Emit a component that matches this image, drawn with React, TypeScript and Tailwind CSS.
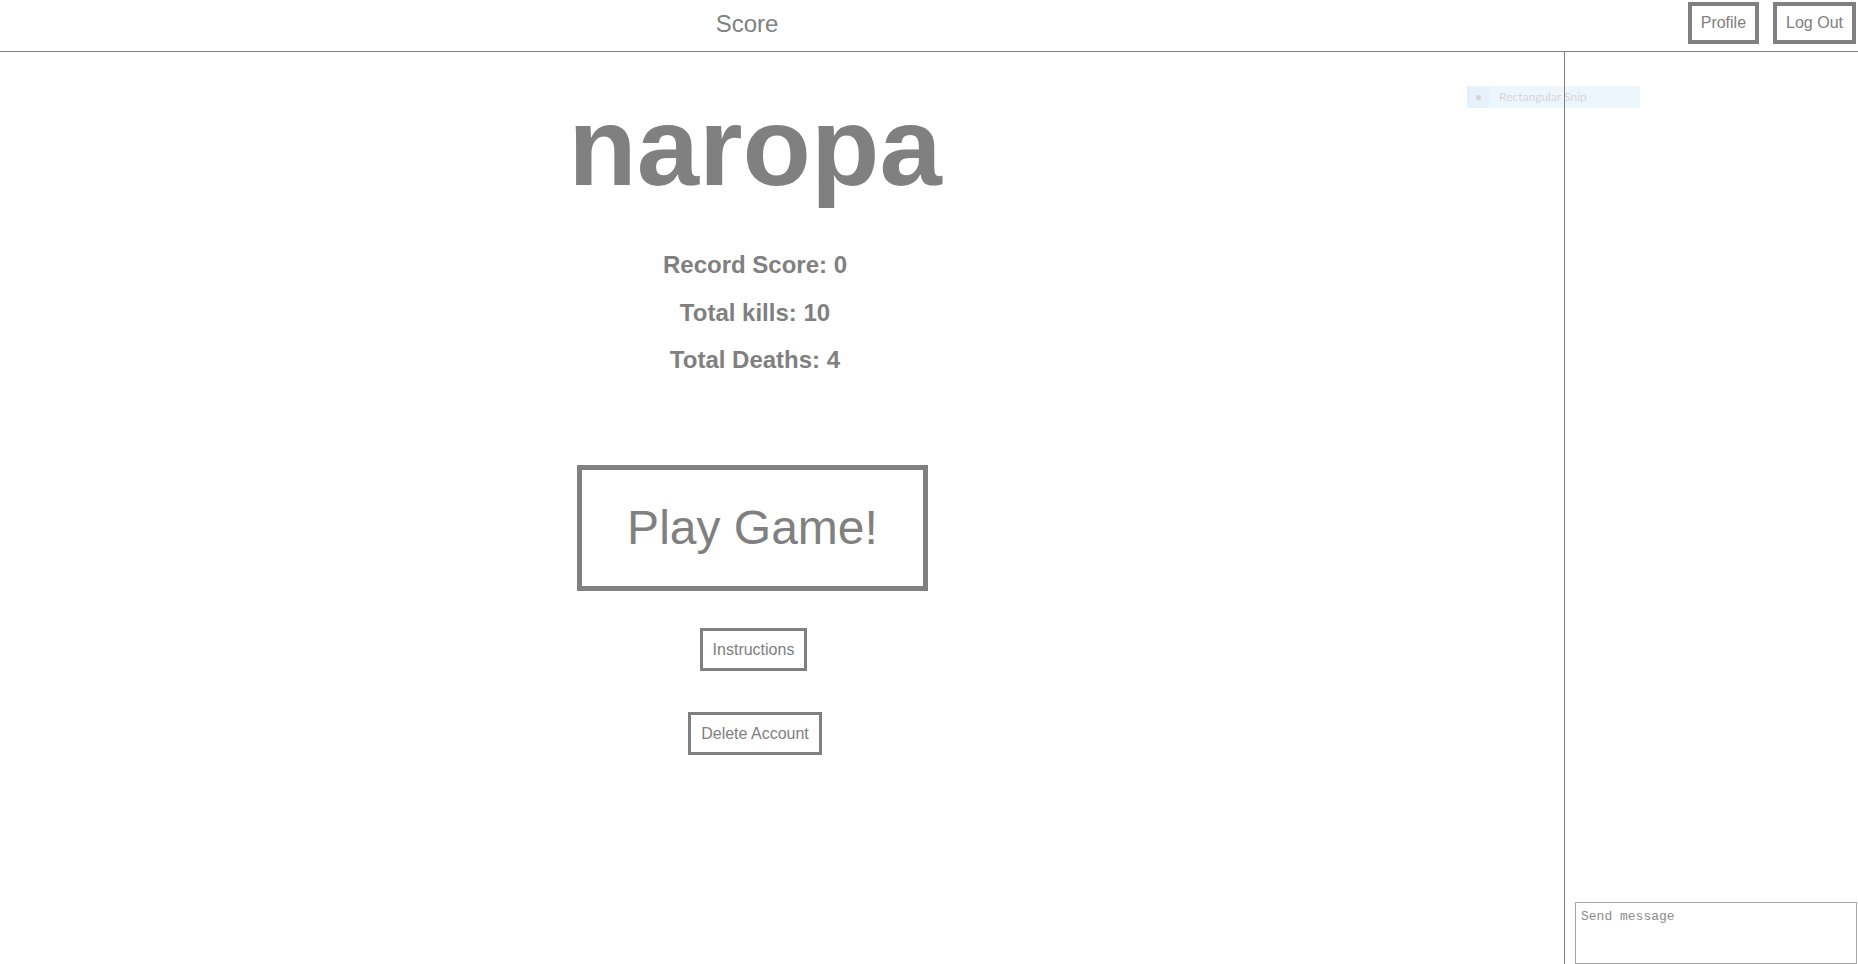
import { useState } from 'react';

const stats = [
  { label: 'Record Score', value: 0 },
  { label: 'Total kills', value: 10 },
  { label: 'Total Deaths', value: 4 },
];

function HeaderButton({ children }: { children: React.ReactNode }) {
  return (
    <button className="border-4 border-[#808080] bg-white px-[9px] py-[8px] text-[16px] leading-[18px] text-[#808080]">
      {children}
    </button>
  );
}

function SmallButton({ children }: { children: React.ReactNode }) {
  return (
    <button className="border-[3px] border-[#808080] bg-white px-[10px] py-[9px] text-[16px] leading-[19px] text-[#808080]">
      {children}
    </button>
  );
}

export default function App() {
  const [message, setMessage] = useState('');

  return (
    <div className="relative flex h-screen w-full flex-col overflow-hidden bg-white font-['Liberation_Sans',Arial,sans-serif] text-[#808080]">
      <header className="flex h-[52px] shrink-0 items-start border-b border-[#808080]">
        <div className="w-[1494px] shrink-0 pt-[10px] text-center text-[24px] leading-[28px]">Score</div>
        <div className="ml-auto mr-[2px] mt-[2px] flex gap-[14px]">
          <HeaderButton>Profile</HeaderButton>
          <HeaderButton>Log Out</HeaderButton>
        </div>
      </header>

      {/* leftover snipping tool tooltip in the capture */}
      <div className="absolute left-[1467px] top-[86px] flex h-[22px] w-[173px] items-center bg-[#eef6fd] font-['Lato',sans-serif] text-[12px] text-[#d6d6d6]">
        <div className="flex h-full w-[22px] items-center justify-center bg-[#e6f1fc]">
          <div className="h-[5px] w-[5px] rounded-full bg-[#d4d4d4]" />
        </div>
        <span className="ml-[10px]">Rectangular Snip</span>
      </div>

      <div className="flex min-h-0 flex-1">
        <main className="w-[1564px] shrink-0">
          <div className="flex w-[1510px] flex-col items-center">
            <h1 className="mt-[30px] text-[112px] font-bold leading-[129px]">naropa</h1>
            <div className="mt-[40px] flex flex-col items-center gap-[20px]">
              {stats.map((s) => (
                <h2 key={s.label} className="text-[24px] font-bold leading-[27.6px]">
                  {s.label}: {s.value}
                </h2>
              ))}
            </div>
            <button className="mr-[5px] mt-[91px] border-[5px] border-[#808080] bg-white px-[45px] py-[30px] text-[48px] leading-[56px] text-[#808080]">
              Play Game!
            </button>
            <div className="mr-[3px] mt-[37px]">
              <SmallButton>Instructions</SmallButton>
            </div>
            <div className="mt-[41px]">
              <SmallButton>Delete Account</SmallButton>
            </div>
          </div>
        </main>

        <aside className="relative flex flex-1 flex-col justify-end border-l border-[#808080] pl-[10px] pr-[1px]">
          <textarea
            value={message}
            onChange={(e) => setMessage(e.target.value)}
            placeholder="Send message"
            className="h-[62px] w-full resize-none border border-[#a6a6a6] bg-white px-[5px] pb-[5px] pt-[6px] font-mono text-[13px] leading-[15px] text-[#555] outline-none placeholder:text-[#8c8c8c]"
          />
        </aside>
      </div>
    </div>
  );
}
